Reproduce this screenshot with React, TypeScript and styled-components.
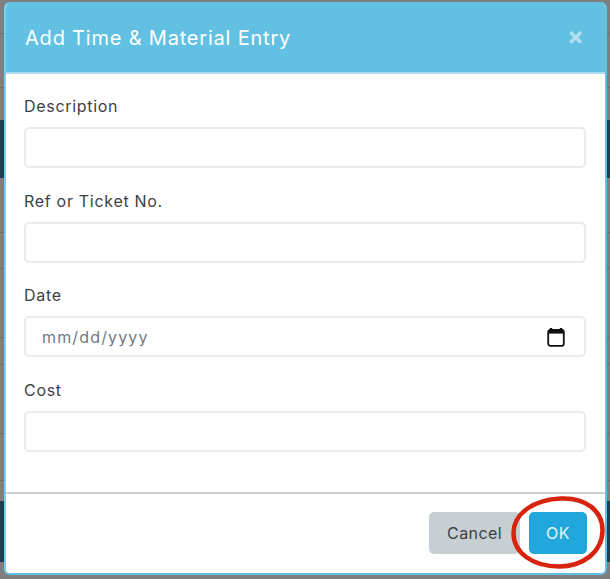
import styled, { createGlobalStyle } from "styled-components";

const GlobalStyle = createGlobalStyle`
    html, body {
        margin: 0;
        padding: 0;
        background: #7f7f7f;
    }
    * {
        box-sizing: border-box;
    }
`;

const fields = [
    { label: "Description", type: "text" },
    { label: "Ref or Ticket No.", type: "text" },
    { label: "Date", type: "date" },
    { label: "Cost", type: "text" },
];

export default function App() {
    return (
        <>
            <GlobalStyle />
            <Backdrop>
                <Modal>
                    <Header>
                        <Title>Add Time &amp; Material Entry</Title>
                        <CloseButton>×</CloseButton>
                    </Header>
                    <Body>
                        {fields.map((field) => (
                            <Field key={field.label}>
                                <Label>{field.label}</Label>
                                {field.type === "date" ? (
                                    <DateBox>
                                        <Placeholder>mm/dd/yyyy</Placeholder>
                                        <CalendarIcon />
                                    </DateBox>
                                ) : (
                                    <Input type="text" />
                                )}
                            </Field>
                        ))}
                    </Body>
                    <Footer>
                        <CancelButton>Cancel</CancelButton>
                        <OkWrap>
                            <OkButton>OK</OkButton>
                            <Ring viewBox="0 0 94 73">
                                <path
                                    d="M50 2.5C75 1.5 92 15 91.5 35C91 56 72 70.5 48 70.5C22 70.5 2.5 57 2.5 37C2.5 18 22 3.5 50 2.5Z"
                                    fill="none"
                                    stroke="#d8230f"
                                    strokeWidth="4.5"
                                />
                            </Ring>
                        </OkWrap>
                    </Footer>
                </Modal>
            </Backdrop>
        </>
    );
}

function CalendarIcon() {
    return (
        <svg width="18" height="20" viewBox="0 0 18 20">
            <path d="M4 1v2M14 1v2" stroke="#111" strokeWidth="2.4" fill="none" />
            <rect x="1.2" y="3" width="15.6" height="15.8" rx="2" fill="none" stroke="#111" strokeWidth="1.8" />
            <rect x="1.2" y="3" width="15.6" height="3.6" fill="#111" />
        </svg>
    );
}

/* the dimmed page behind the modal only shows as thin strips at the edges */
const Backdrop = styled.div`
    width: 610px;
    height: 579px;
    padding: 2px 3px 4px 4px;
    overflow: hidden;
    font-family: "Inter", "Liberation Sans", sans-serif;
    background: linear-gradient(
        to bottom,
        #7f7f7f 0 33px,
        #6e6e6e 33px 34px,
        #7f7f7f 34px 87px,
        #6e6e6e 87px 88px,
        #7f7f7f 88px 120px,
        #1f3f4f 120px 178px,
        #7f7f7f 178px 232px,
        #6e6e6e 232px 233px,
        #7f7f7f 233px 268px,
        #6e6e6e 268px 269px,
        #7f7f7f 269px 337px,
        #6e6e6e 337px 338px,
        #7f7f7f 338px 364px,
        #6e6e6e 364px 365px,
        #7f7f7f 365px 433px,
        #6e6e6e 433px 434px,
        #7f7f7f 434px 480px,
        #6e6e6e 480px 481px,
        #7f7f7f 481px 501px,
        #1f3f4f 501px 562px,
        #7f7f7f 562px
    );
`;

const Modal = styled.div`
    width: 603px;
    height: 573px;
    display: flex;
    flex-direction: column;
    background: #fff;
    border-style: solid;
    border-width: 1px 2px 2px 2px;
    border-color: #62c1e2 #62c1e2 #62c1e2 #72d0f0;
    border-radius: 6px;
    overflow: hidden;
`;

const Header = styled.div`
    height: 71px;
    flex-shrink: 0;
    display: flex;
    align-items: center;
    justify-content: space-between;
    padding: 0 21px 3px 19px;
    background: #62c1e2;
    border-bottom: 2px solid #a9dcee;
`;

const Title = styled.h5`
    margin: 4px 0 0;
    font-size: 20px;
    font-weight: 400;
    letter-spacing: 0.8px;
    color: #fff;
`;

const CloseButton = styled.span`
    font-size: 25px;
    font-weight: 700;
    line-height: 1;
    color: #b4e0f0;
`;

const Body = styled.div`
    flex: 1;
    padding: 22px 19px 0 18px;
`;

const Field = styled.div`
    margin-bottom: 22.67px;
`;

const Label = styled.label`
    display: block;
    height: 20px;
    margin-bottom: 11px;
    font-size: 16px;
    line-height: 20px;
    letter-spacing: 0.7px;
    color: #3d4145;
`;

const Input = styled.input`
    display: block;
    width: 100%;
    height: 41px;
    background: #fff;
    border: 2px solid #e9ebef;
    border-radius: 5px;
    outline: none;
`;

const DateBox = styled.div`
    display: flex;
    align-items: center;
    justify-content: space-between;
    width: 100%;
    height: 41px;
    padding: 0 19px 0 16px;
    background: #fff;
    border: 2px solid #e9ebef;
    border-radius: 5px;
`;

const Placeholder = styled.span`
    font-size: 16px;
    letter-spacing: 1.15px;
    color: #6f7b85;
`;

const Footer = styled.div`
    height: 81px;
    flex-shrink: 0;
    display: flex;
    align-items: flex-start;
    justify-content: flex-end;
    gap: 9px;
    padding: 18px 18px 0 0;
    border-top: 2px solid #ccd0d3;
`;

const CancelButton = styled.button`
    width: 91px;
    height: 42px;
    border: none;
    border-radius: 5px;
    background: #c8cfd3;
    font-family: inherit;
    font-size: 16px;
    letter-spacing: 0.4px;
    color: #3a4046;
`;

const OkWrap = styled.div`
    position: relative;
`;

const OkButton = styled.button`
    display: block;
    width: 58px;
    height: 42px;
    border: none;
    border-radius: 5px;
    background: #22a7dc;
    font-family: inherit;
    font-size: 16px;
    letter-spacing: 0.4px;
    color: #e6f5fb;
`;

const Ring = styled.svg`
    position: absolute;
    left: -18px;
    top: -16px;
    width: 94px;
    height: 73px;
    pointer-events: none;
`;
